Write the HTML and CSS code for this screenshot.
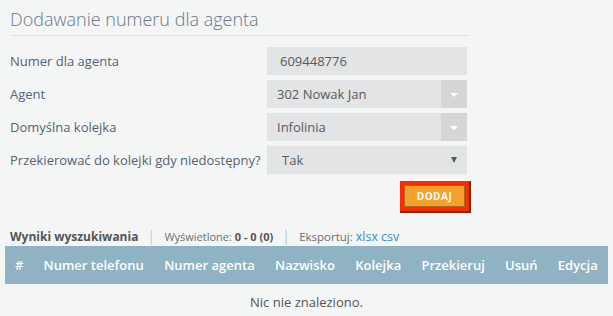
FILE: index.html
```html
<!DOCTYPE html>
<html lang="pl">
<head>
<meta charset="utf-8">
<link rel="stylesheet" href="styles.css">
</head>
<body>
<div class="panel">
  <h1 class="title">Dodawanie numeru dla agenta</h1>
  <form class="form">
    <label class="label">Numer dla agenta</label>
    <div class="field field-input"><span class="val v1">609448776</span></div>
    <label class="label">Agent</label>
    <div class="field field-select"><span class="val">302 Nowak Jan</span><span class="arrow-box"><span class="tri"></span></span></div>
    <label class="label">Domyślna kolejka</label>
    <div class="field field-select"><span class="val">Infolinia</span><span class="arrow-box"><span class="tri"></span></span></div>
    <label class="label">Przekierować do kolejki gdy niedostępny?</label>
    <div class="field field-native"><span class="val v4">Tak</span><span class="tri-dark"></span></div>
  </form>
  <div class="actions"><button class="btn" type="button">DODAJ</button></div>
</div>
<div class="results">
  <strong class="res-title">Wyniki wyszukiwania</strong>
  <span class="sep sep-a">|</span>
  <span class="shown">Wyświetlone: <b>0 - 0 (0)</b></span>
  <span class="sep sep-b">|</span>
  <span class="shown export">Eksportuj: <a class="lnk" href="#">xlsx</a> <a class="lnk" href="#">csv</a></span>
</div>
<table class="grid">
  <thead>
    <tr><th>#</th><th>Numer telefonu</th><th>Numer agenta</th><th>Nazwisko</th><th>Kolejka</th><th>Przekieruj</th><th>Usuń</th><th>Edycja</th></tr>
  </thead>
  <tbody>
    <tr><td colspan="8" class="empty">Nic nie znaleziono.</td></tr>
  </tbody>
</table>
</body>
</html>
```

FILE: styles.css
```css
html, body {
  margin: 0;
  padding: 0;
  background: #f4f5f5;
  font-family: "Open Sans", "DejaVu Sans", sans-serif;
  color: #555c63;
}
.panel {
  width: 459px;
  margin-left: 10px;
}
.title {
  margin: 0;
  padding-top: 6px;
  padding-bottom: 3px;
  font-size: 18px;
  line-height: 26px;
  font-weight: 300;
  color: #6a7989;
  border-bottom: 1px solid #dfe2e2;
}
.form {
  margin: 11px 0 0 0;
  display: grid;
  grid-template-columns: 257px 200px;
  grid-auto-rows: 28px;
  row-gap: 5px;
}
.label {
  display: flex;
  align-items: center;
  font-size: 13px;
  color: #566371;
}
.field {
  display: flex;
  align-items: center;
  background: #e2e4e5;
  font-size: 13px;
  color: #555b60;
}
.val {
  flex: 1;
  padding-left: 10px;
}
.val.v1 { padding-left: 13px; }
.val.v4 { padding-left: 15px; }
.arrow-box {
  width: 26px;
  height: 100%;
  background: #d4d6d7;
  display: flex;
  align-items: center;
  justify-content: center;
}
.tri {
  width: 0;
  height: 0;
  margin-top: 2px;
  border-left: 4px solid transparent;
  border-right: 4px solid transparent;
  border-top: 4px solid #ffffff;
}
.tri-dark {
  width: 0;
  height: 0;
  margin-right: 10px;
  border-left: 3px solid transparent;
  border-right: 3px solid transparent;
  border-top: 6px solid #4c5a64;
}
.actions {
  display: flex;
  justify-content: flex-end;
  padding-right: 4px;
  margin-top: 11px;
}
.btn {
  width: 61px;
  height: 22px;
  padding: 0;
  background: #f6a02c;
  border: 1px solid #a8661e;
  color: #ffffff;
  font-family: "Open Sans", sans-serif;
  font-weight: 700;
  font-size: 10px;
  letter-spacing: 0.5px;
  box-shadow: 0 0 0 4px #ff2a00, 1px 1px 0 5px #7a2a18;
}
.results {
  margin-top: 19px;
  padding-left: 10px;
  height: 20px;
  line-height: 20px;
  font-size: 12px;
  white-space: nowrap;
}
.res-title {
  font-size: 12px;
  font-weight: 700;
  color: #555;
}
.sep {
  margin: 0 6px;
  font-size: 14px;
}
.sep-a { color: #e2c4b6; }
.sep-b { color: #b9c6d0; }
.shown {
  font-size: 11px;
  color: #6a6f74;
}
.shown.export { font-size: 11.5px; }
.shown b { color: #555; }
.lnk {
  color: #3a8ccc;
  text-decoration: none;
  font-size: 12.5px;
}
.grid {
  margin: 0 5px;
  width: 603px;
  border-collapse: collapse;
}
.grid th {
  height: 38px;
  padding: 0 10px;
  background: #8fb3c2;
  color: #ffffff;
  font-size: 13px;
  font-weight: 600;
  text-align: left;
  white-space: nowrap;
}
.grid td.empty {
  height: 34px;
  text-align: center;
  font-size: 13px;
  color: #555;
}
```
